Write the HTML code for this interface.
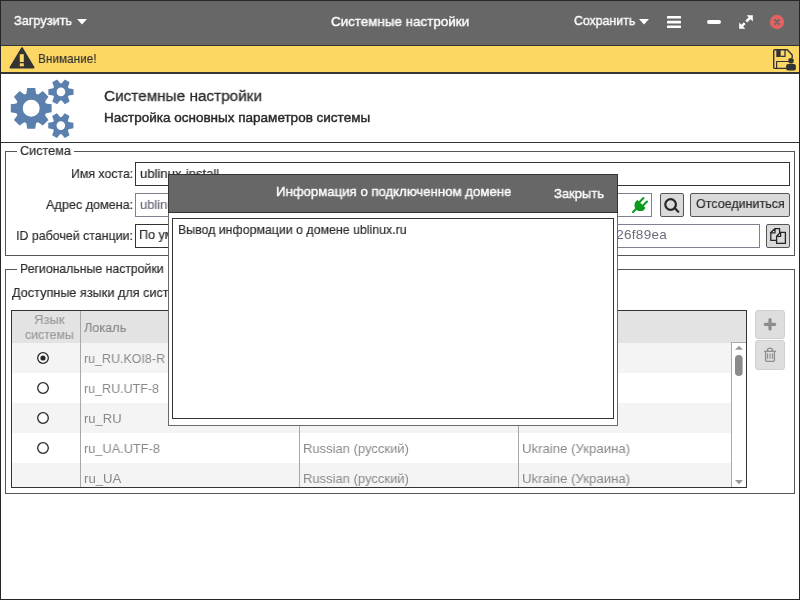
<!DOCTYPE html>
<html><head><meta charset="utf-8">
<style>
*{margin:0;padding:0;box-sizing:border-box}
html,body{width:800px;height:600px;overflow:hidden;background:#fff}
body{position:relative;font-family:"Liberation Sans",sans-serif;font-size:13px;color:#262626}
.a{position:absolute}
.t{position:absolute;white-space:nowrap;transform-origin:0 0;will-change:transform}
</style></head><body>
<!-- header bar -->
<div class="a" style="left:0;top:0;width:800px;height:46px;background:#676767;border-bottom:1px solid #343434"></div>
<div class="t" style="left:13.50px;top:14.17px;color:#fff;font-size:13.5px;line-height:13.5px;font-weight:400;transform:scaleX(0.9409);-webkit-text-stroke:0.4px #fff">Загрузить</div>
<svg class="a" style="left:76px;top:18px" width="12" height="8"><path d="M1 1H11L6 6.5Z" fill="#fff"/></svg>
<div class="t" style="left:330.50px;top:15.17px;color:#fff;font-size:13.5px;line-height:13.5px;font-weight:400;transform:scaleX(0.9915);-webkit-text-stroke:0.4px #fff">Системные настройки</div>
<div class="t" style="left:573.90px;top:14.17px;color:#fff;font-size:13.5px;line-height:13.5px;font-weight:400;transform:scaleX(0.9136);-webkit-text-stroke:0.4px #fff">Сохранить</div>
<svg class="a" style="left:638px;top:18px" width="12" height="8"><path d="M1 1H11L6 6.5Z" fill="#fff"/></svg>
<svg class="a" style="left:665px;top:14px" width="18" height="16"><g fill="#fff"><rect x="2" y="2" width="14" height="2.6" rx=".6"/><rect x="2" y="6.8" width="14" height="2.6" rx=".6"/><rect x="2" y="11.4" width="14" height="2.6" rx=".6"/></g></svg>
<svg class="a" style="left:705px;top:18px" width="18" height="8"><rect x="2" y="2" width="14" height="4" rx="2" fill="#fff"/></svg>
<svg class="a" style="left:737px;top:13px" width="18" height="18"><g fill="#fff"><path d="M13 4.8L9.3 8.5M7.7 10.1L5 12.8" stroke="#fff" stroke-width="2.5" fill="none"/><path d="M9.6 2.2H15.8V8.4Z"/><path d="M2.2 9.6V15.8H8.4Z"/></g></svg>
<svg class="a" style="left:769px;top:14px" width="16" height="16"><circle cx="8" cy="8" r="7.2" fill="#e06262"/><path d="M5.9 5.9L10.1 10.1M10.1 5.9L5.9 10.1" stroke="#676767" stroke-width="1.8" stroke-linecap="round"/></svg>

<!-- yellow info bar -->
<div class="a" style="left:0;top:46px;width:800px;height:28px;background:#fdd764;border-bottom:2px solid #363636"></div>
<svg class="a" style="left:9px;top:46px" width="27" height="24"><path d="M13 2.2L24.5 21.5H1.5Z" fill="#333" stroke="#333" stroke-width="2" stroke-linejoin="round"/><rect x="10.8" y="8.2" width="4" height="7.8" fill="#fdd764"/><rect x="10.8" y="17.3" width="4" height="3" fill="#fdd764"/></svg>
<div class="t" style="left:37.50px;top:51.77px;color:#333;font-size:13.5px;line-height:13.5px;font-weight:400;transform:scaleX(0.8740);-webkit-text-stroke:0.18px #333">Внимание!</div>
<svg class="a" style="left:772px;top:48px" width="26" height="24"><g fill="none" stroke="#333" stroke-linejoin="round"><path d="M20.2 10V6.9L15.3 1.7H2.9Q1.7 1.7 1.7 2.9V19.2Q1.7 20.4 2.9 20.4H14.5" stroke-width="1.4"/><path d="M8.7 8.4H13V2" stroke-width="1.3"/><path d="M4.6 20.4V13.5H16.7" stroke-width="1.2"/></g><rect x="4.3" y="1.7" width="4.4" height="7.3" fill="#333"/><circle cx="19" cy="12.8" r="2.8" fill="#333"/><rect x="14.1" y="16" width="9.8" height="6.5" rx="2" fill="#333"/></svg>

<!-- title section -->
<svg class="a" style="left:0;top:0" width="80" height="145"><g fill="#5b80ae" fill-rule="evenodd"><path d="M45.91 113.25 L51.61 112.35 L51.61 104.35 L45.91 103.45 L45.06 101.42 L48.46 96.75 L42.80 91.09 L38.13 94.49 L36.10 93.64 L35.20 87.94 L27.20 87.94 L26.30 93.64 L24.27 94.49 L19.60 91.09 L13.94 96.75 L17.34 101.42 L16.49 103.45 L10.79 104.35 L10.79 112.35 L16.49 113.25 L17.34 115.28 L13.94 119.95 L19.60 125.61 L24.27 122.21 L26.30 123.06 L27.20 128.76 L35.20 128.76 L36.10 123.06 L38.13 122.21 L42.80 125.61 L48.46 119.95 L45.06 115.28Z M22.70 108.35 A8.5 8.5 0 1 0 39.70 108.35 A8.5 8.5 0 1 0 22.70 108.35Z"/><path d="M68.76 95.50 L73.55 94.65 L73.55 89.15 L68.76 88.30 L67.97 86.94 L69.63 82.36 L64.87 79.61 L61.74 83.34 L60.16 83.34 L57.03 79.61 L52.27 82.36 L53.93 86.94 L53.14 88.30 L48.35 89.15 L48.35 94.65 L53.14 95.50 L53.93 96.86 L52.27 101.44 L57.03 104.19 L60.16 100.46 L61.74 100.46 L64.87 104.19 L69.63 101.44 L67.97 96.86Z M56.65 91.90 A4.3 4.3 0 1 0 65.25 91.90 A4.3 4.3 0 1 0 56.65 91.90Z"/><path d="M68.66 129.20 L73.45 128.35 L73.45 122.85 L68.66 122.00 L67.87 120.64 L69.53 116.06 L64.77 113.31 L61.64 117.04 L60.06 117.04 L56.93 113.31 L52.17 116.06 L53.83 120.64 L53.04 122.00 L48.25 122.85 L48.25 128.35 L53.04 129.20 L53.83 130.56 L52.17 135.14 L56.93 137.89 L60.06 134.16 L61.64 134.16 L64.77 137.89 L69.53 135.14 L67.87 130.56Z M56.55 125.60 A4.3 4.3 0 1 0 65.15 125.60 A4.3 4.3 0 1 0 56.55 125.60Z"/></g></svg>
<div class="t" style="left:104.00px;top:87.58px;color:#2b2b2b;font-size:15.5px;line-height:15.5px;font-weight:400;transform:scaleX(0.9887);-webkit-text-stroke:0.18px #2b2b2b;-webkit-text-stroke:0.3px #2b2b2b">Системные настройки</div>
<div class="t" style="left:104.00px;top:111.37px;color:#2b2b2b;font-size:13.5px;line-height:13.5px;font-weight:400;transform:scaleX(0.9995);-webkit-text-stroke:0.18px #2b2b2b;-webkit-text-stroke:0.45px #2b2b2b">Настройка основных параметров системы</div>
<div class="a" style="left:0;top:142px;width:800px;height:1px;background:#333"></div>

<!-- frame Система -->
<div class="a" style="left:5px;top:151px;width:790px;height:105px;border:1px solid #555"></div>
<div class="a" style="left:17px;top:146px;width:57px;height:10px;background:#fff"></div>
<div class="t" style="left:19.70px;top:143.57px;color:#2b2b2b;font-size:13.5px;line-height:13.5px;font-weight:400;transform:scaleX(0.9379);-webkit-text-stroke:0.18px #2b2b2b">Система</div>
<div class="t" style="left:70.75px;top:166.57px;color:#2b2b2b;font-size:13.5px;line-height:13.5px;font-weight:400;transform:scaleX(0.9127);-webkit-text-stroke:0.18px #2b2b2b">Имя хоста:</div>
<div class="a" style="left:135px;top:162px;width:655px;height:24px;border:1px solid #333"></div>
<div class="t" style="left:139.75px;top:166.57px;color:#2b2b2b;font-size:13.5px;line-height:13.5px;font-weight:400;transform:scaleX(0.9689);-webkit-text-stroke:0.18px #2b2b2b">ublinux-install</div>
<div class="t" style="left:45.75px;top:197.82px;color:#2b2b2b;font-size:13.5px;line-height:13.5px;font-weight:400;transform:scaleX(0.9352);-webkit-text-stroke:0.18px #2b2b2b">Адрес домена:</div>
<div class="a" style="left:135px;top:193px;width:517px;height:24px;border:1px solid #7f7f94"></div>
<div class="t" style="left:139.75px;top:197.82px;color:#6c6c7e;font-size:13.5px;line-height:13.5px;font-weight:400;transform:scaleX(0.9565);-webkit-text-stroke:0.18px #6c6c7e">ublinux.ru</div>
<svg class="a" style="left:630px;top:195px" width="20" height="20"><g fill="#0b9a1b" stroke="#0b9a1b" stroke-linecap="round"><path d="M3 17L6.5 13.5" stroke-width="2" fill="none"/><path d="M13.5 3L9.5 7M17 6.5L13 10.5" stroke-width="2" fill="none"/><path d="M7.3 5.6L14.6 12.9Q13.2 16 9 15.4Q5.4 14.6 5.1 10.6Q5 7.4 7.3 5.6Z" stroke-width="1.2"/></g></svg>
<div class="a" style="left:660px;top:193px;width:24px;height:24px;border:1px solid #555;border-radius:2px;background:#dadada"></div>
<svg class="a" style="left:660px;top:193px" width="24" height="24"><circle cx="10.6" cy="11.5" r="5.3" fill="none" stroke="#262626" stroke-width="2.2"/><path d="M14.6 15L18.3 18.7" stroke="#262626" stroke-width="2.2" stroke-linecap="round"/></svg>
<div class="a" style="left:690px;top:193px;width:100px;height:24px;border:1px solid #555;border-radius:2px;background:#dadada"></div>
<div class="t" style="left:695.80px;top:197.47px;color:#2b2b2b;font-size:13.5px;line-height:13.5px;font-weight:400;transform:scaleX(0.9264);-webkit-text-stroke:0.18px #2b2b2b">Отсоединиться</div>
<div class="t" style="left:15.50px;top:229.07px;color:#2b2b2b;font-size:13.5px;line-height:13.5px;font-weight:400;transform:scaleX(0.9187);-webkit-text-stroke:0.18px #2b2b2b">ID рабочей станции:</div>
<div class="a" style="left:135px;top:224px;width:625px;height:24px;border:1px solid #7f7f94;overflow:hidden"><div class="t" style="right:92px;top:3.07px;color:#6c6c7e;font-size:13.5px;line-height:13.5px;letter-spacing:0.3px">xxxxxxxx-26f89ea</div></div>
<div class="a" style="left:135px;top:224px;width:40px;height:24px;border:1px solid #333;border-right:none"></div>
<div class="t" style="left:138.80px;top:228.27px;color:#2b2b2b;font-size:13.5px;line-height:13.5px;font-weight:400;transform:scaleX(0.9310);-webkit-text-stroke:0.18px #2b2b2b">По умолчанию</div>
<div class="a" style="left:766px;top:224px;width:24px;height:24px;border:1px solid #555;border-radius:2px;background:#dadada"></div>
<svg class="a" style="left:766px;top:224px" width="24" height="24"><g fill="#dadada" stroke="#262626" stroke-width="1.3" stroke-linejoin="round"><path d="M9 4.6H13.6V16.4H4.8V8.8Z"/><path d="M4.8 8.8H9V4.6Z" fill="#fff"/><path d="M14.6 8.4H19.4V19.4H10.6V12.4Z"/><path d="M10.6 12.4H14.6V8.4Z" fill="#fff"/></g></svg>

<!-- frame Региональные -->
<div class="a" style="left:5px;top:269px;width:790px;height:225px;border:1px solid #555"></div>
<div class="a" style="left:17px;top:263px;width:151px;height:10px;background:#fff"></div>
<div class="t" style="left:19.90px;top:261.57px;color:#2b2b2b;font-size:13.5px;line-height:13.5px;font-weight:400;transform:scaleX(0.9083);-webkit-text-stroke:0.18px #2b2b2b">Региональные настройки</div>
<div class="t" style="left:11.90px;top:286.17px;color:#2b2b2b;font-size:13.5px;line-height:13.5px;font-weight:400;transform:scaleX(0.9395);-webkit-text-stroke:0.18px #2b2b2b">Доступные языки для системы:</div>

<!-- tree -->
<div class="a" style="left:11px;top:310px;width:736px;height:178px;border:1px solid #333;background:#fff;overflow:hidden">
  <div class="a" style="left:0;top:0;width:734px;height:32px;background:#e3e3e3"></div>
  <div class="a" style="left:0;top:32px;width:720px;height:30px;background:#f4f4f4"></div>
  <div class="a" style="left:0;top:92px;width:720px;height:30px;background:#f4f4f4"></div>
  <div class="a" style="left:0;top:152px;width:720px;height:30px;background:#f4f4f4"></div>
  <div class="a" style="left:68px;top:0;width:1px;height:178px;background:#a8a8a8"></div>
  <div class="a" style="left:287px;top:32px;width:1px;height:150px;background:#a8a8a8"></div>
  <div class="a" style="left:506px;top:32px;width:1px;height:150px;background:#a8a8a8"></div>
</div>
<div class="t" style="left:34.40px;top:312.97px;color:#9a9a9a;font-size:13.5px;line-height:13.5px;font-weight:400;transform:scaleX(0.9663);-webkit-text-stroke:0.18px #9a9a9a">Язык</div>
<div class="t" style="left:24.80px;top:328.07px;color:#9a9a9a;font-size:13.5px;line-height:13.5px;font-weight:400;transform:scaleX(0.9127);-webkit-text-stroke:0.18px #9a9a9a">системы</div>
<div class="t" style="left:84.20px;top:320.57px;color:#8a8a8a;font-size:13.5px;line-height:13.5px;font-weight:400;transform:scaleX(0.9400);-webkit-text-stroke:0.18px #8a8a8a">Локаль</div>
<div class="t" style="left:84.00px;top:351.99px;color:#898989;font-size:13px;line-height:13px;font-weight:400;transform:scaleX(0.9582);-webkit-text-stroke:0px #898989">ru_RU.KOI8-R</div>
<div class="t" style="left:83.70px;top:381.99px;color:#898989;font-size:13px;line-height:13px;font-weight:400;transform:scaleX(0.9613);-webkit-text-stroke:0px #898989">ru_RU.UTF-8</div>
<div class="t" style="left:83.70px;top:411.69px;color:#898989;font-size:13px;line-height:13px;font-weight:400;transform:scaleX(0.9926);-webkit-text-stroke:0px #898989">ru_RU</div>
<div class="t" style="left:83.70px;top:441.69px;color:#898989;font-size:13px;line-height:13px;font-weight:400;transform:scaleX(0.9832);-webkit-text-stroke:0px #898989">ru_UA.UTF-8</div>
<div class="t" style="left:83.70px;top:472.49px;color:#898989;font-size:13px;line-height:13px;font-weight:400;transform:scaleX(1.0120);-webkit-text-stroke:0px #898989">ru_UA</div>
<div class="t" style="left:303.10px;top:442.07px;color:#898989;font-size:13.5px;line-height:13.5px;font-weight:400;transform:scaleX(0.9621);-webkit-text-stroke:0px #898989">Russian (русский)</div>
<div class="t" style="left:522.00px;top:442.07px;color:#898989;font-size:13.5px;line-height:13.5px;font-weight:400;transform:scaleX(0.9759);-webkit-text-stroke:0px #898989">Ukraine (Украина)</div>
<div class="t" style="left:303.10px;top:472.07px;color:#898989;font-size:13.5px;line-height:13.5px;font-weight:400;transform:scaleX(0.9621);-webkit-text-stroke:0px #898989">Russian (русский)</div>
<div class="t" style="left:522.00px;top:472.07px;color:#898989;font-size:13.5px;line-height:13.5px;font-weight:400;transform:scaleX(0.9759);-webkit-text-stroke:0px #898989">Ukraine (Украина)</div>
<svg class="a" style="left:35px;top:349.5px" width="16" height="16"><circle cx="8" cy="8" r="5.3" fill="#fff" stroke="#262626" stroke-width="1.3"/><circle cx="8" cy="8" r="2.6" fill="#262626"/></svg>
<svg class="a" style="left:35px;top:379.5px" width="16" height="16"><circle cx="8" cy="8" r="5.3" fill="#fff" stroke="#262626" stroke-width="1.3"/></svg>
<svg class="a" style="left:35px;top:409.5px" width="16" height="16"><circle cx="8" cy="8" r="5.3" fill="#fff" stroke="#262626" stroke-width="1.3"/></svg>
<svg class="a" style="left:35px;top:439.5px" width="16" height="16"><circle cx="8" cy="8" r="5.3" fill="#fff" stroke="#262626" stroke-width="1.3"/></svg>

<!-- scrollbar -->
<div class="a" style="left:731px;top:342px;width:15px;height:145px;border-left:1px solid #aaa;border-top:1px solid #aaa;background:#fff"></div>
<svg class="a" style="left:731px;top:342px" width="15" height="145"><path d="M4 7.7H12L8 3.8Z" fill="#999"/><rect x="4" y="13" width="7.6" height="21" rx="3.8" fill="#8a8a8a"/><path d="M4 138H12L8 142.2Z" fill="#999"/></svg>
<!-- add/remove -->
<div class="a" style="left:755px;top:310px;width:30px;height:29px;border:1px solid #d0d0d0;border-radius:3px;background:#dedede"></div>
<svg class="a" style="left:755px;top:310px" width="30" height="29"><path d="M15 9.6V19M10.3 14.3H19.7" stroke="#8c8c8c" stroke-width="3.2" stroke-linecap="round"/></svg>
<div class="a" style="left:755px;top:340px;width:30px;height:30px;border:1px solid #d0d0d0;border-radius:3px;background:#dedede"></div>
<svg class="a" style="left:755px;top:340px" width="30" height="30"><g fill="none" stroke="#8c8c8c" stroke-width="1.3" stroke-linejoin="round"><path d="M9 11.3H21"/><path d="M12.6 11V9.6Q12.6 8.3 13.9 8.3H16.1Q17.4 8.3 17.4 9.6V11"/><path d="M10.6 12V20Q10.6 21.4 12 21.4H18Q19.4 21.4 19.4 20V12"/><path d="M12.6 13.6V18.8M15 13.6V18.8M17.4 13.6V18.8" stroke-width="1.1"/></g></svg>

<!-- dialog -->
<div class="a" style="left:168px;top:174px;width:450px;height:252px;border:1px solid #6a6a6a;background:#fff"></div>
<div class="a" style="left:168px;top:174px;width:450px;height:39px;background:#676767;border:1px solid #333"></div>
<div class="t" style="left:276.20px;top:185.32px;color:#fff;font-size:13.5px;line-height:13.5px;font-weight:400;transform:scaleX(0.9765);-webkit-text-stroke:0.4px #fff">Информация о подключенном домене</div>
<div class="t" style="left:553.50px;top:187.32px;color:#fff;font-size:13.5px;line-height:13.5px;font-weight:400;transform:scaleX(0.9615);-webkit-text-stroke:0.4px #fff">Закрыть</div>
<div class="a" style="left:172px;top:218px;width:442px;height:201px;border:1px solid #333;background:#fff"></div>
<div class="t" style="left:177.90px;top:222.87px;color:#2b2b2b;font-size:13.5px;line-height:13.5px;font-weight:400;transform:scaleX(0.9154);-webkit-text-stroke:0.18px #2b2b2b">Вывод информации о домене ublinux.ru</div>

<!-- window border -->
<div class="a" style="left:0;top:0;width:800px;height:600px;border:1px solid #262626"></div>
</body></html>
